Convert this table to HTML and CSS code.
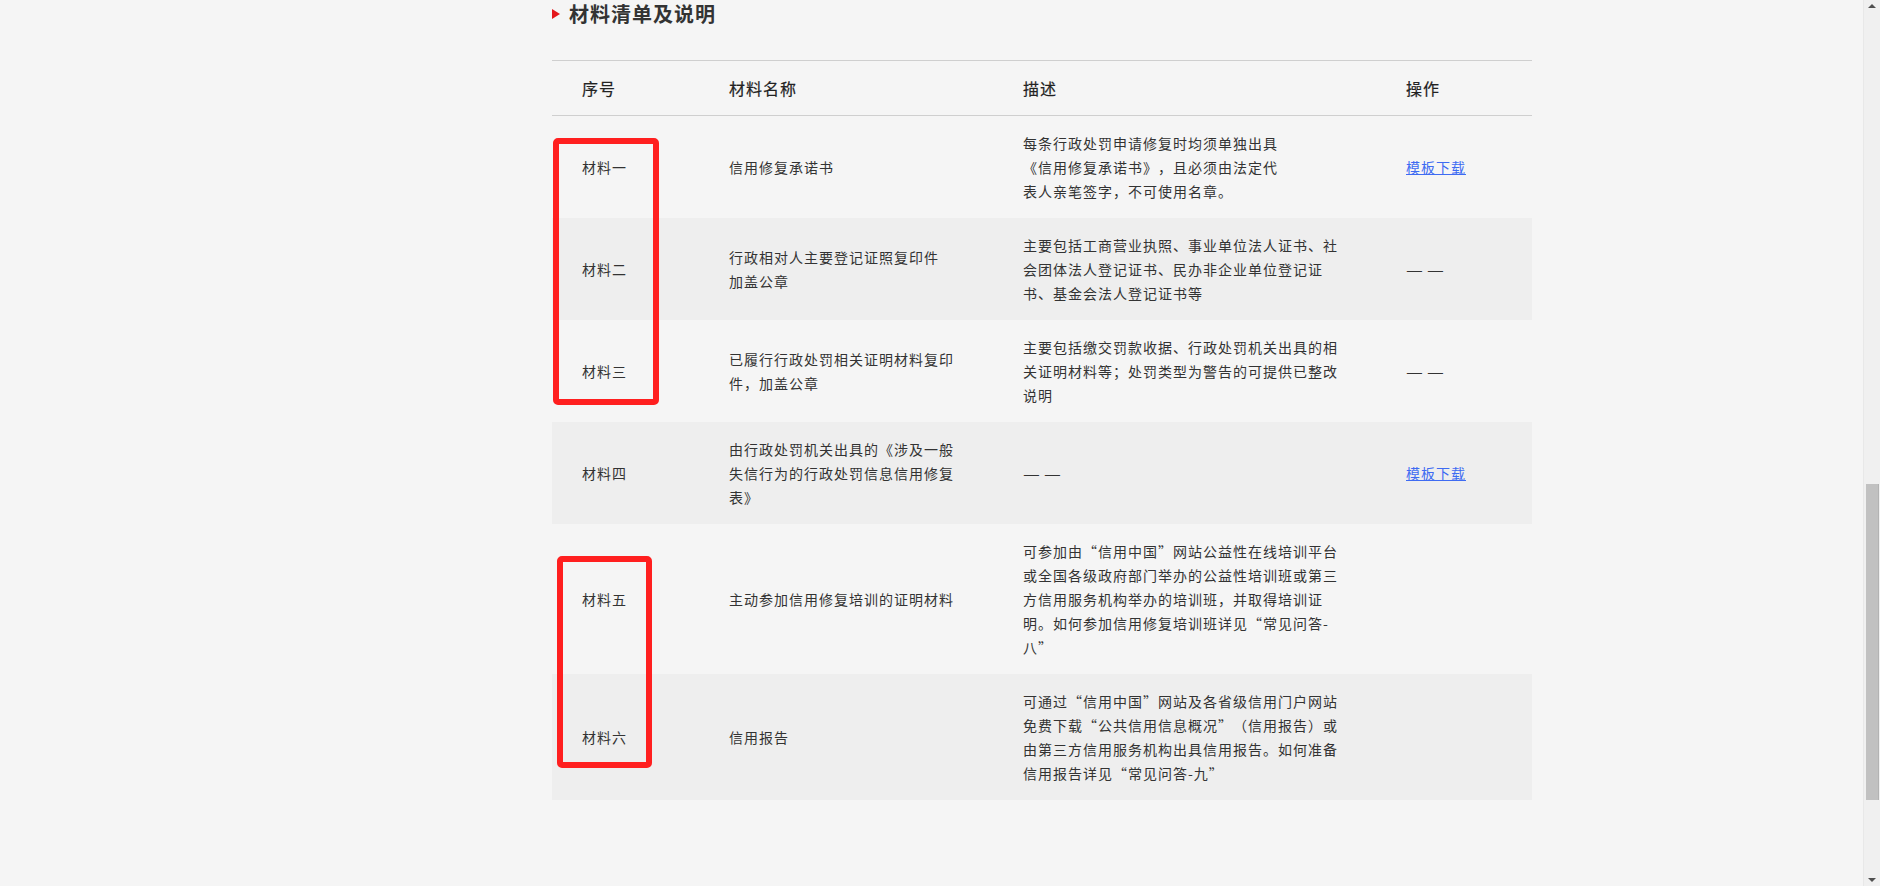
FILE: index.html
```html
<!DOCTYPE html>
<html lang="zh-CN">
<head>
<meta charset="utf-8">
<title>材料清单及说明</title>
<link rel="stylesheet" href="styles.css">
</head>
<body>
<div class="page">
  <section class="main">
    <h2 class="title"><span class="tri"></span>材料清单及说明</h2>
    <table class="mtable">
      <colgroup>
        <col class="c1"><col class="c2"><col class="c3"><col class="c4">
      </colgroup>
      <thead>
        <tr><th>序号</th><th>材料名称</th><th>描述</th><th>操作</th></tr>
      </thead>
      <tbody>
        <tr>
          <td>材料一</td>
          <td>信用修复承诺书</td>
          <td>每条行政处罚申请修复时均须单独出具<br>《信用修复承诺书》，且必须由法定代<br>表人亲笔签字，不可使用名章。</td>
          <td><a href="#" class="dl">模板下载</a></td>
        </tr>
        <tr>
          <td>材料二</td>
          <td>行政相对人主要登记证照复印件<br>加盖公章</td>
          <td>主要包括工商营业执照、事业单位法人证书、社<br>会团体法人登记证书、民办非企业单位登记证<br>书、基金会法人登记证书等</td>
          <td><span class="na">—</span><span class="na">—</span></td>
        </tr>
        <tr>
          <td>材料三</td>
          <td>已履行行政处罚相关证明材料复印<br>件，加盖公章</td>
          <td>主要包括缴交罚款收据、行政处罚机关出具的相<br>关证明材料等；处罚类型为警告的可提供已整改<br>说明</td>
          <td><span class="na">—</span><span class="na">—</span></td>
        </tr>
        <tr>
          <td>材料四</td>
          <td>由行政处罚机关出具的《涉及一般<br>失信行为的行政处罚信息信用修复<br>表》</td>
          <td><span class="na">—</span><span class="na">—</span></td>
          <td><a href="#" class="dl">模板下载</a></td>
        </tr>
        <tr>
          <td>材料五</td>
          <td>主动参加信用修复培训的证明材料</td>
          <td>可参加由“信用中国”网站公益性在线培训平台<br>或全国各级政府部门举办的公益性培训班或第三<br>方信用服务机构举办的培训班，并取得培训证<br>明。如何参加信用修复培训班详见“常见问答-<br>八”</td>
          <td></td>
        </tr>
        <tr>
          <td>材料六</td>
          <td>信用报告</td>
          <td>可通过“信用中国”网站及各省级信用门户网站<br>免费下载“公共信用信息概况”（信用报告）或<br>由第三方信用服务机构出具信用报告。如何准备<br>信用报告详见“常见问答-九”</td>
          <td></td>
        </tr>
      </tbody>
    </table>
    <div class="mark mark-a"></div>
    <div class="mark mark-b"></div>
  </section>
</div>
<div class="scrollbar">
  <span class="arrow up"></span>
  <span class="thumb"></span>
  <span class="arrow down"></span>
</div>
</body>
</html>
```
FILE: styles.css
```css
html, body {
  margin: 0;
  padding: 0;
  background: #f5f5f5;
}
body {
  font-family: "Noto Sans CJK SC", "Noto Sans", sans-serif;
  color: #333;
  height: 886px;
  overflow: hidden;
  text-spacing-trim: space-all;
}
.page {
  padding-left: 552px;
}
.main {
  position: relative;
  width: 980px;
}
.title {
  margin: 0;
  height: 28px;
  display: flex;
  align-items: center;
  font-size: 20px;
  line-height: 28px;
  font-weight: bold;
  letter-spacing: 1px;
  color: #333;
}
.tri {
  width: 0;
  height: 0;
  border-top: 5px solid transparent;
  border-bottom: 5px solid transparent;
  border-left: 8px solid #e4171c;
  margin-right: 9px;
  margin-top: -1px;
}
.mtable {
  margin-top: 32px;
  width: 980px;
  table-layout: fixed;
  border-collapse: collapse;
  border-spacing: 0;
}
.c1 { width: 147px; }
.c2 { width: 294px; }
.c3 { width: 383px; }
.c4 { width: 156px; }
.mtable th {
  height: 54px;
  padding: 0 0 0 30px;
  text-align: left;
  font-size: 16px;
  font-weight: normal;
  letter-spacing: 1px;
  color: #222;
  -webkit-text-stroke: 0.2px #222;
  border-top: 1px solid #cfcfcf;
  border-bottom: 1px solid #cfcfcf;
}
.mtable td {
  padding: 15px 10px 15px 30px;
  font-size: 14px;
  line-height: 24px;
  letter-spacing: 1px;
  white-space: nowrap;
  vertical-align: middle;
  color: #333;
}
.mtable tbody tr {
  height: 102px;
}
.mtable tbody tr:nth-child(even) {
  background: #eeeeee;
}
.na {
  display: inline-block;
  width: 14px;
  margin-right: 7px;
  letter-spacing: 0;
  font-size: 14px;
  transform: scaleX(1.35);
  transform-origin: left center;
}
.dl {
  color: #3e6bf2;
  text-decoration: underline;
}
.mark {
  position: absolute;
  box-sizing: border-box;
  border: 6px solid #ff1f1f;
  border-radius: 5px;
}
.mark-a {
  left: 1px;
  top: 138px;
  width: 106px;
  height: 267px;
}
.mark-b {
  left: 5px;
  top: 556px;
  width: 95px;
  height: 212px;
}
.scrollbar {
  position: fixed;
  top: 0;
  right: 0;
  width: 17px;
  height: 886px;
  background: #f0f0f0;
  border-left: 1px solid #e8e8e8;
  box-sizing: border-box;
}
.thumb {
  position: absolute;
  left: 2px;
  width: 12px;
  top: 484px;
  height: 316px;
  background: #c1c1c1;
  border-right: 1px solid #b3b3b3;
}
.arrow {
  position: absolute;
  left: 4px;
  width: 0;
  height: 0;
  border-left: 4px solid transparent;
  border-right: 4px solid transparent;
}
.arrow.up {
  top: 4px;
  border-bottom: 4px solid #505050;
}
.arrow.down {
  bottom: 4px;
  border-top: 4px solid #505050;
}
```
